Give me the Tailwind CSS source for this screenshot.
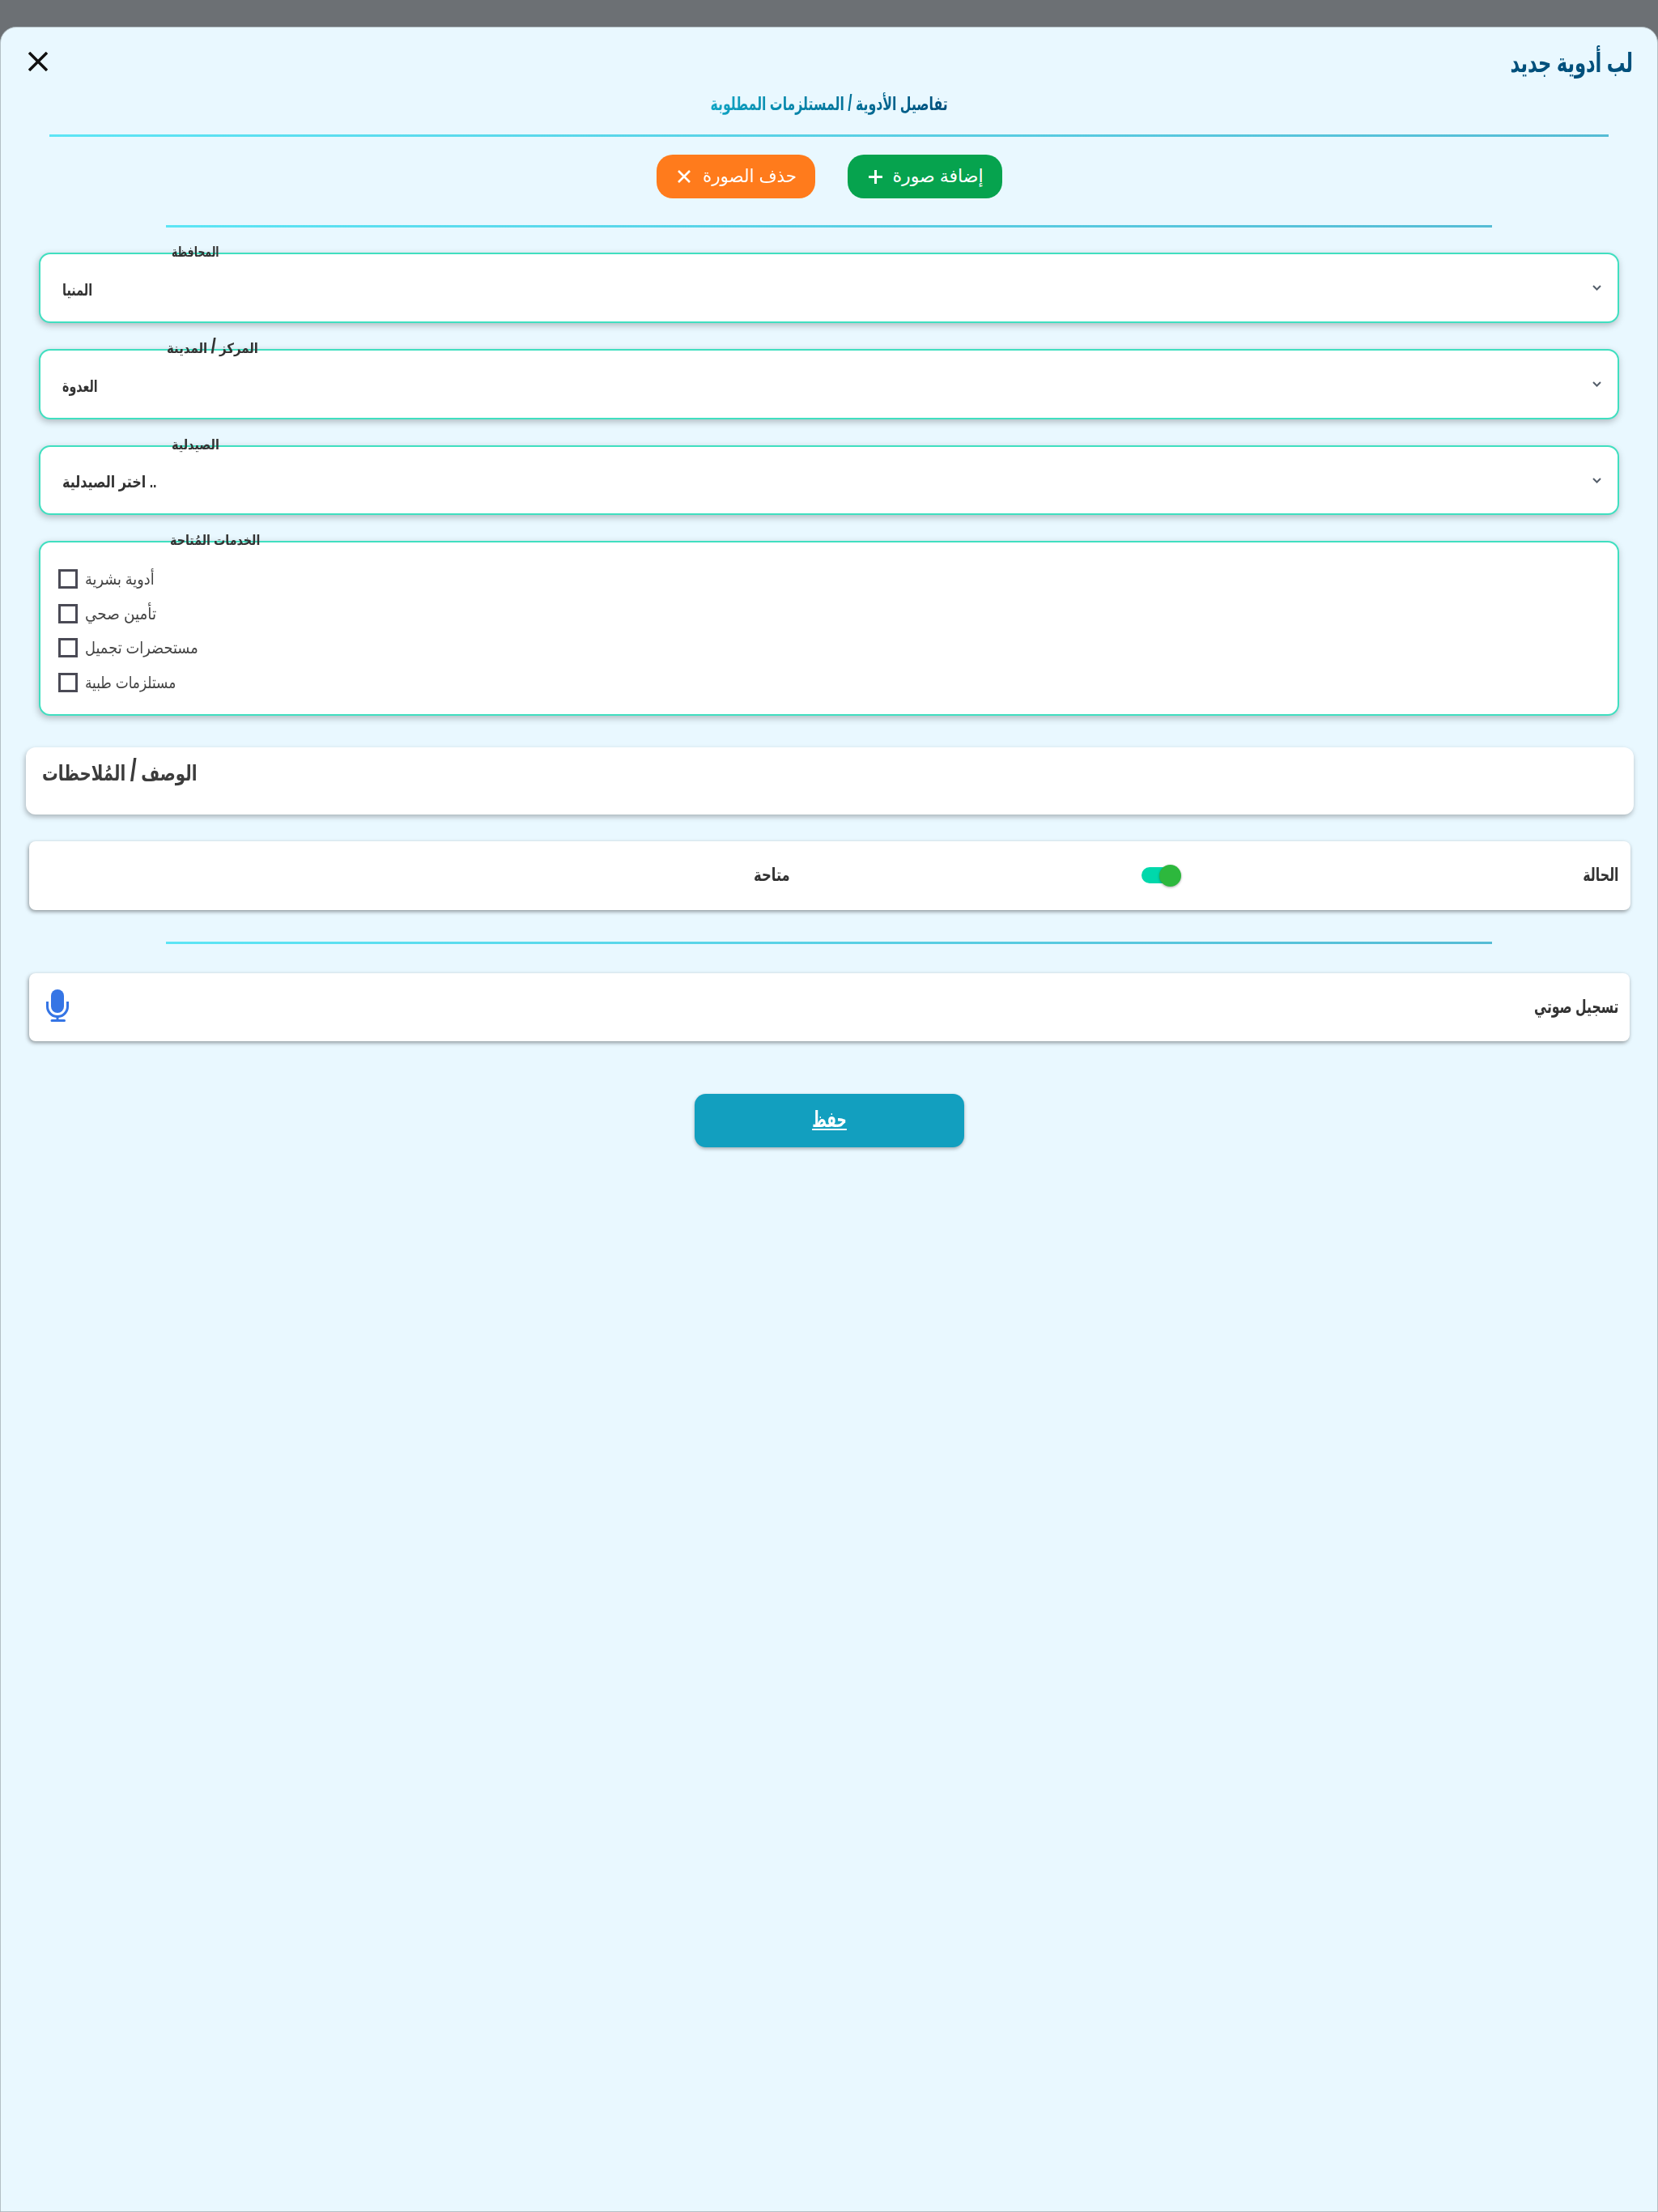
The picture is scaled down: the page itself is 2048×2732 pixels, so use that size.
<!DOCTYPE html>
<html lang="ar">
<head>
    <meta charset="UTF-8">
    <meta name="viewport" content="width=device-width, initial-scale=1.0">
    <title>طلب أدوية جديد</title>
    <script src="https://cdn.jsdelivr.net/npm/@tailwindcss/browser@4"></script>
</head>
<body class="bg-[#6c7074] font-['Liberation_Sans','DejaVu_Sans',sans-serif]">
    <div class="h-[2732px] pt-[33px] overflow-hidden">
        <div class="h-[2699px] flex flex-col bg-[#e9f8ff] border border-[#b4c0c6] rounded-t-[20px] overflow-hidden">

            <!-- header -->
            <div class="flex justify-between items-center h-[30px] mt-[28px] pl-[34px] pr-[30px]">
                <svg class="w-[24px] h-[24px] -mt-[2px]" viewBox="0 0 24 24" fill="none" stroke="#111" stroke-width="3.5"><path d="M1 1l22 22M23 1L1 23"/></svg>
                <h1 class="mt-[2px] text-[33px] font-bold text-[#00507c] whitespace-nowrap origin-right scale-x-[0.686]">لب أدوية جديد</h1>
            </div>

            <div class="h-[32px] mt-[20px] flex justify-center items-center">
                <p class="text-[23px] font-bold whitespace-nowrap text-transparent bg-clip-text bg-gradient-to-l from-[#004f7c] to-[#12a5c4] scale-x-[0.685]">تفاصيل الأدوية <span class="text-[28px] leading-none">/</span> المستلزمات المطلوبة</p>
            </div>

            <div class="h-[3px] mt-[22px] mx-[60px] bg-gradient-to-r from-[#5ce5f5] to-[#55bcd5]"></div>

            <!-- image buttons -->
            <div class="flex justify-center gap-[40px] mt-[22px]">
                <button class="flex items-center gap-[15px] w-[196px] h-[54px] pl-[26px] rounded-[20px] bg-[#ff7b1c] text-white text-[22px]">
                    <svg class="w-[16px] h-[16px]" viewBox="0 0 16 16" fill="none" stroke="#fff" stroke-width="2.6"><path d="M1 1l14 14M15 1L1 15"/></svg>
                    <span class="-mt-[2px] origin-left scale-x-[0.97]">حذف الصورة</span>
                </button>
                <button class="flex items-center gap-[13px] w-[191px] h-[54px] pl-[26px] rounded-[20px] bg-[#06a34e] text-white text-[22px]">
                    <svg class="w-[17px] h-[17px]" viewBox="0 0 17 17" fill="none" stroke="#fff" stroke-width="3"><path d="M8.500 0v17M0 8.500h17"/></svg>
                    <span class="-mt-[2px]">إضافة صورة</span>
                </button>
            </div>

            <div class="h-[3px] mt-[33px] mx-[204px] bg-gradient-to-r from-[#5ce5f5] to-[#55bcd5]"></div>

            <!-- selects -->
            <div class="relative mt-[31px] mx-[47px] h-[87px] flex items-center justify-between pl-[27px] pr-[20px] bg-white border-2 border-[#40dfc0] rounded-[14px] shadow-[-1px_3px_8px_rgba(0,0,0,0.25)]">
                <span class="absolute left-[162px] top-[-15px] text-[17px] font-bold text-[#333] origin-left scale-x-[0.73]">المحافظة</span>
                <span class="mt-[5px] text-[20px] font-bold text-[#333] origin-left scale-x-[0.72]">المنيا</span>
                <svg class="w-[11px] h-[7px]" viewBox="0 0 11 7" fill="none" stroke="#555f6b" stroke-width="2"><path d="M1 1l4.500 4.500L10 1"/></svg>
            </div>

            <div class="relative mt-[32px] mx-[47px] h-[87px] flex items-center justify-between pl-[27px] pr-[20px] bg-white border-2 border-[#40dfc0] rounded-[14px] shadow-[-1px_3px_8px_rgba(0,0,0,0.25)]">
                <span class="absolute left-[156px] top-[-19px] text-[17px] font-bold text-[#333] whitespace-nowrap origin-left scale-x-[0.88]">المركز <span class="text-[26px] leading-none">/</span> المدينة</span>
                <span class="mt-[5px] text-[20px] font-bold text-[#333] origin-left scale-x-[0.71]">العدوة</span>
                <svg class="w-[11px] h-[7px]" viewBox="0 0 11 7" fill="none" stroke="#555f6b" stroke-width="2"><path d="M1 1l4.500 4.500L10 1"/></svg>
            </div>

            <div class="relative mt-[32px] mx-[47px] h-[86px] flex items-center justify-between pl-[27px] pr-[20px] bg-white border-2 border-[#40dfc0] rounded-[14px] shadow-[-1px_3px_8px_rgba(0,0,0,0.25)]">
                <span class="absolute left-[162px] top-[-15px] text-[17px] font-bold text-[#333] origin-left scale-x-[0.85]">الصيدلية</span>
                <span class="mt-[3px] text-[20px] font-bold text-[#333] whitespace-nowrap origin-left scale-x-[0.8]">اختر الصيدلية ..</span>
                <svg class="w-[11px] h-[7px]" viewBox="0 0 11 7" fill="none" stroke="#555f6b" stroke-width="2"><path d="M1 1l4.500 4.500L10 1"/></svg>
            </div>

            <!-- services -->
            <div class="relative mt-[32px] mx-[47px] h-[216px] pt-[33px] pl-[22px] flex flex-col gap-[18.6px] bg-white border-2 border-[#40dfc0] rounded-[14px] shadow-[-1px_3px_8px_rgba(0,0,0,0.25)]">
                <span class="absolute left-[160px] top-[-15px] text-[17px] font-bold text-[#333] whitespace-nowrap origin-left scale-x-[0.84]">الخدمات المُتاحة</span>
                <label class="flex items-center gap-[9px] h-[24px] text-[20px] text-[#444]"><span class="w-[24px] h-[24px] border-[3px] border-[#4a4a55]"></span><span class="origin-left scale-x-[0.885]">أدوية بشرية</span></label>
                <label class="flex items-center gap-[9px] h-[24px] text-[20px] text-[#444]"><span class="w-[24px] h-[24px] border-[3px] border-[#4a4a55]"></span><span class="origin-left scale-x-[0.92]">تأمين صحي</span></label>
                <label class="flex items-center gap-[9px] h-[24px] text-[20px] text-[#444]"><span class="w-[24px] h-[24px] border-[3px] border-[#4a4a55]"></span><span class="origin-left scale-x-[0.89]">مستحضرات تجميل</span></label>
                <label class="flex items-center gap-[9px] h-[24px] text-[20px] text-[#444]"><span class="w-[24px] h-[24px] border-[3px] border-[#4a4a55]"></span><span class="origin-left scale-x-[0.85]">مستلزمات طبية</span></label>
            </div>

            <!-- notes -->
            <div class="mt-[39px] ml-[31px] mr-[29px] h-[83px] pt-[9px] pl-[20px] bg-white rounded-[12px] shadow-[-1px_3px_6px_rgba(0,0,0,0.28)]">
                <p class="w-fit text-[26px] font-bold text-[#3c3c3c] whitespace-nowrap origin-left scale-x-[0.76]">الوصف <span class="text-[38px] leading-none">/</span> المُلاحظات</p>
            </div>

            <!-- status -->
            <div class="mt-[33px] ml-[35px] mr-[33px] h-[85px] flex items-center pr-[14px] bg-white rounded-[8px] shadow-[-1px_2px_5px_rgba(0,0,0,0.4)]">
                <span class="-mt-[2px] ml-[895px] w-[46px] text-[22px] font-bold text-[#333] whitespace-nowrap origin-left scale-x-[0.745]">متاحة</span>
                <span class="relative -mt-[1px] ml-[433px] w-[40px] h-[20px] rounded-full bg-[#00d8ab]">
                    <span class="absolute left-[22px] top-[-3px] w-[27px] h-[27px] rounded-full bg-[#2db83d] shadow-[0_1px_3px_rgba(0,0,0,0.35)]"></span>
                </span>
                <span class="-mt-[2px] ml-auto text-[22px] font-bold text-[#333] origin-right scale-x-[0.72]">الحالة</span>
            </div>

            <div class="h-[3px] mt-[39px] mx-[204px] bg-gradient-to-r from-[#5ce5f5] to-[#55bcd5]"></div>

            <!-- voice note -->
            <div class="mt-[36px] ml-[35px] mr-[34px] h-[84px] flex items-center justify-between pl-[21px] pr-[14px] bg-white rounded-[8px] shadow-[-1px_2px_5px_rgba(0,0,0,0.4)]">
                <svg class="w-[28px] h-[40px] mb-[4px]" viewBox="0 0 28 40" fill="#3575e5"><rect x="6" y="0" width="16" height="29" rx="8"/><path d="M0 15h3v6a11 11 0 0 0 22 0v-6h3v6a14 14 0 0 1-12.500 14v2h7a1.500 1.500 0 0 1 0 3H7a1.500 1.500 0 0 1 0-3h5.500v-2A14 14 0 0 1 0 21z"/></svg>
                <span class="-mt-[2px] text-[23px] text-[#333] font-bold whitespace-nowrap origin-right scale-x-[0.68]">تسجيل صوتي</span>
            </div>

            <!-- save -->
            <button class="mt-[65px] self-center w-[333px] h-[66px] rounded-[14px] bg-[#129fbf] text-white text-[27px] font-bold shadow-[0_2px_4px_rgba(0,0,0,0.3)] relative left-[0.5px]"><span class="block -mt-[2px] underline scale-x-[0.63]">حفظ</span></button>
        </div>
    </div>
</body>
</html>
